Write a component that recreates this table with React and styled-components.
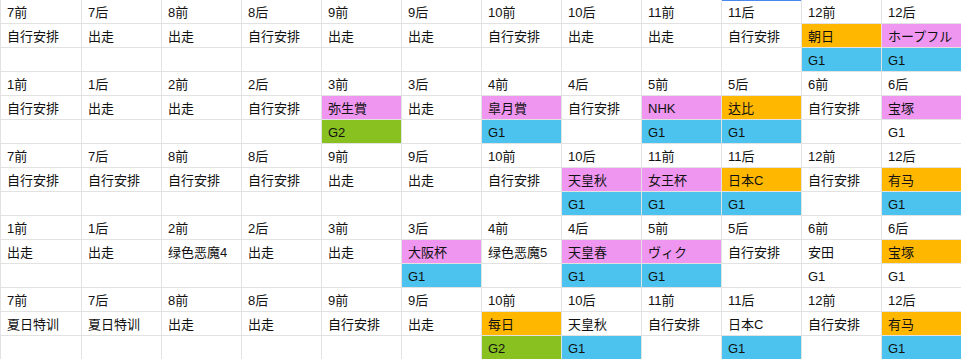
import React from "react";
import styled, { createGlobalStyle } from "styled-components";

const Global = createGlobalStyle`
  html, body { margin: 0; padding: 0; background: #ffffff; }
  body { font-family: "Liberation Sans", "Noto Sans CJK JP", "Noto Sans CJK SC", sans-serif; }
`;

const Sheet = styled.div`
  display: grid;
  grid-template-columns: 80px repeat(11, 79px);
  grid-auto-rows: 23px;
  gap: 1px;
  padding-left: 1px;
  background: #e2e2e2;
  width: 961px;
  height: 359px;
  overflow: hidden;
  box-sizing: border-box;
`;

const FILL = {
  pink: "#ee96f0",
  orange: "#ffb700",
  blue: "#4cc3ee",
  green: "#89c121",
};

const Cell = styled.div`
  position: relative;
  background: ${(p) => (p.$fill ? FILL[p.$fill] : "#ffffff")};
  color: #111;
  font-size: 13px;
  line-height: 23px;
  padding: 1px 0 0 6px;
  box-sizing: border-box;
  white-space: nowrap;
  overflow: hidden;
  ${(p) => p.$selected && `box-shadow: inset 0 1px 0 #4a88ee;`}
`;

const H1 = ["7前", "7后", "8前", "8后", "9前", "9后", "10前", "10后", "11前", "11后", "12前", "12后"];
const H2 = ["1前", "1后", "2前", "2后", "3前", "3后", "4前", "4后", "5前", "5后", "6前", "6后"];

const groups = [
  {
    head: H1,
    plan: ["自行安排", "出走", "出走", "自行安排", "出走", "出走", "自行安排", "出走", "出走", "自行安排", ["朝日", "orange"], ["ホープフル", "pink"]],
    grade: [null, null, null, null, null, null, null, null, null, null, ["G1", "blue"], ["G1", "blue"]],
  },
  {
    head: H2,
    plan: ["自行安排", "出走", "出走", "自行安排", ["弥生賞", "pink"], "出走", ["皐月賞", "pink"], "自行安排", ["NHK", "pink"], ["达比", "orange"], "自行安排", ["宝塚", "pink"]],
    grade: [null, null, null, null, ["G2", "green"], null, ["G1", "blue"], null, ["G1", "blue"], ["G1", "blue"], null, "G1"],
  },
  {
    head: H1,
    plan: ["自行安排", "自行安排", "自行安排", "自行安排", "出走", "出走", "自行安排", ["天皇秋", "pink"], ["女王杯", "pink"], ["日本C", "orange"], "自行安排", ["有马", "orange"]],
    grade: [null, null, null, null, null, null, null, ["G1", "blue"], ["G1", "blue"], ["G1", "blue"], null, ["G1", "blue"]],
  },
  {
    head: H2,
    plan: ["出走", "出走", "绿色恶魔4", "出走", "出走", ["大阪杯", "pink"], "绿色恶魔5", ["天皇春", "pink"], ["ヴィク", "pink"], "自行安排", "安田", ["宝塚", "orange"]],
    grade: [null, null, null, null, null, ["G1", "blue"], null, ["G1", "blue"], ["G1", "blue"], null, "G1", "G1"],
  },
  {
    head: H1,
    plan: ["夏日特训", "夏日特训", "出走", "出走", "自行安排", "出走", ["每日", "orange"], "天皇秋", "自行安排", "日本C", "自行安排", ["有马", "orange"]],
    grade: [null, null, null, null, null, null, ["G2", "green"], ["G1", "blue"], null, ["G1", "blue"], null, ["G1", "blue"]],
  },
];

function renderCell(v, key, extra = {}) {
  let text = "";
  let fill;
  if (Array.isArray(v)) [text, fill] = v;
  else if (v) text = v;
  return (
    <Cell key={key} $fill={fill} {...extra}>
      {text}
    </Cell>
  );
}

export default function App() {
  const cells = [];
  groups.forEach((g, gi) => {
    g.head.forEach((h, i) =>
      cells.push(renderCell(h, `h${gi}-${i}`, gi === 0 && i === 9 ? { $selected: true } : {}))
    );
    g.plan.forEach((p, i) => cells.push(renderCell(p, `p${gi}-${i}`)));
    g.grade.forEach((c, i) => cells.push(renderCell(c, `g${gi}-${i}`)));
  });
  return (
    <>
      <Global />
      <Sheet>{cells}</Sheet>
    </>
  );
}
